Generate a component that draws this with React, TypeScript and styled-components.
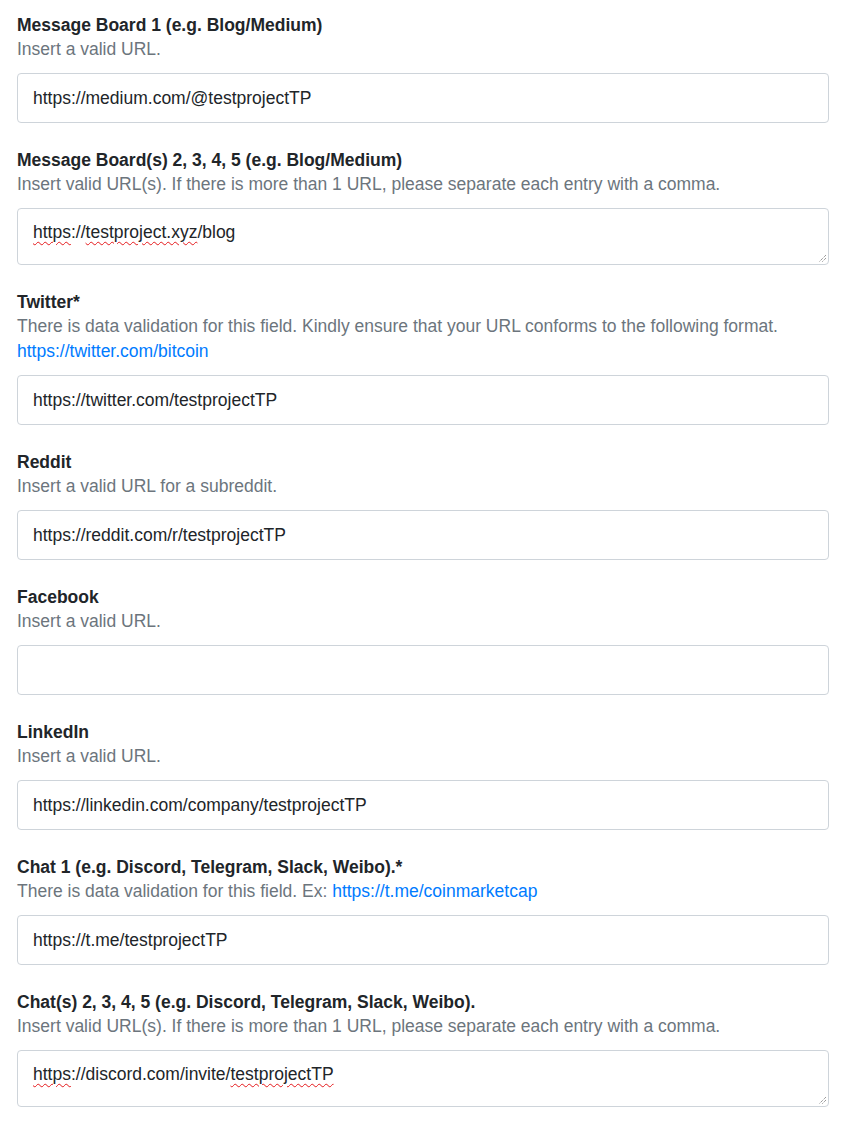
import React from "react";
import styled, { createGlobalStyle } from "styled-components";

const GlobalStyle = createGlobalStyle`
  body {
    margin: 0;
    background: #fff;
    font-family: "Liberation Sans", Arial, sans-serif;
    font-size: 17.5px;
    color: #212529;
  }
`;

const Page = styled.div`
  padding: 13px 21px 0 17px;
`;

const Group = styled.div`
  margin-bottom: 25px;
`;

const Label = styled.div`
  font-weight: 700;
  line-height: 24px;
  color: #212529;
`;

const Help = styled.div`
  line-height: 25px;
  color: #6c757d;
`;

const Link = styled.a`
  color: #007bff;
  text-decoration: none;
`;

const Input = styled.input`
  display: block;
  box-sizing: border-box;
  width: 100%;
  height: 50px;
  margin-top: 11px;
  padding: 12px 15px;
  border: 1px solid #ced4da;
  border-radius: 4px;
  font-family: inherit;
  font-size: 17.5px;
  color: #212529;
  background: #fff;
  outline: none;
`;

const TextArea = styled.div`
  position: relative;
  box-sizing: border-box;
  width: 100%;
  height: 57px;
  margin-top: 11px;
  padding: 11px 15px;
  border: 1px solid #ced4da;
  border-radius: 4px;
  line-height: 24px;
  color: #212529;
  background: #fff;
`;

const Misspelled = styled.span`
  text-decoration: underline wavy #e5191c;
  text-decoration-thickness: 1px;
  text-underline-offset: 3px;
`;

const Grip = styled.svg`
  position: absolute;
  right: 1px;
  bottom: 1px;
`;

const ResizeGrip = () => (
  <Grip width="10" height="10" viewBox="0 0 10 10">
    <path d="M9 2 L2 9 M9 5 L5 9" stroke="#6f6f6f" strokeWidth="1" strokeDasharray="1 1" />
  </Grip>
);

type FieldProps = {
  label: string;
  help: React.ReactNode;
  value?: string;
};

const Field: React.FC<FieldProps> = ({ label, help, value }) => (
  <Group>
    <Label>{label}</Label>
    <Help>{help}</Help>
    <Input type="text" defaultValue={value} spellCheck={false} />
  </Group>
);

const App: React.FC = () => {
  return (
    <Page>
      <GlobalStyle />
      <Field
        label="Message Board 1 (e.g. Blog/Medium)"
        help="Insert a valid URL."
        value="https://medium.com/@testprojectTP"
      />
      <Group>
        <Label>Message Board(s) 2, 3, 4, 5 (e.g. Blog/Medium)</Label>
        <Help>
          Insert valid URL(s). If there is more than 1 URL, please separate each entry with a comma.
        </Help>
        <TextArea>
          <Misspelled>https</Misspelled>://<Misspelled>testproject.xyz</Misspelled>/blog
          <ResizeGrip />
        </TextArea>
      </Group>
      <Field
        label="Twitter*"
        help={
          <>
            There is data validation for this field. Kindly ensure that your URL conforms to the following format.
            <br />
            <Link href="#">https://twitter.com/bitcoin</Link>
          </>
        }
        value="https://twitter.com/testprojectTP"
      />
      <Field
        label="Reddit"
        help="Insert a valid URL for a subreddit."
        value="https://reddit.com/r/testprojectTP"
      />
      <Field label="Facebook" help="Insert a valid URL." value="" />
      <Field
        label="LinkedIn"
        help="Insert a valid URL."
        value="https://linkedin.com/company/testprojectTP"
      />
      <Field
        label="Chat 1 (e.g. Discord, Telegram, Slack, Weibo).*"
        help={
          <>
            There is data validation for this field. Ex: <Link href="#">https://t.me/coinmarketcap</Link>
          </>
        }
        value="https://t.me/testprojectTP"
      />
      <Group>
        <Label>Chat(s) 2, 3, 4, 5 (e.g. Discord, Telegram, Slack, Weibo).</Label>
        <Help>
          Insert valid URL(s). If there is more than 1 URL, please separate each entry with a comma.
        </Help>
        <TextArea>
          <Misspelled>https</Misspelled>://discord.com/invite/<Misspelled>testprojectTP</Misspelled>
          <ResizeGrip />
        </TextArea>
      </Group>
    </Page>
  );
};

export default App;
